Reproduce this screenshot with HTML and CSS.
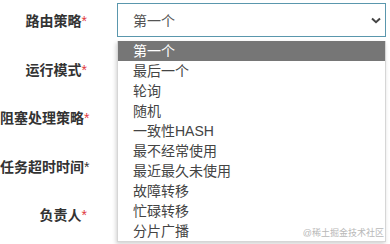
FILE: index.html
```html
<!DOCTYPE html>
<html lang="zh-CN">
<head>
  <meta charset="UTF-8">
  <meta name="viewport" content="width=device-width, initial-scale=1.0">
  <title>任务配置</title>
  <link rel="stylesheet" href="styles.css">
</head>
<body>

  <!-- Job form -->
  <div class="form">
    <div class="row">
      <label class="label"><span>路由策略<span class="req">*</span></span></label>
      <div class="select">
        <span>第一个</span>
        <svg class="chevron" width="10" height="7" viewBox="0 0 10 7"><path d="M1 1.5 L5 5.2 L9 1.5" fill="none" stroke="#444" stroke-width="2"/></svg>
      </div>
    </div>
    <div class="row">
      <label class="label"><span>运行模式<span class="req">*</span></span></label>
    </div>
    <div class="row">
      <label class="label"><span>阻塞处理策略<span class="req">*</span></span></label>
    </div>
    <div class="row">
      <label class="label"><span>任务超时时间<span class="req dark">*</span></span></label>
    </div>
    <div class="row">
      <label class="label"><span>负责人<span class="req">*</span></span></label>
    </div>
  </div>

  <!-- Open option list -->
  <ul class="dropdown">
    <li class="active">第一个</li>
    <li>最后一个</li>
    <li>轮询</li>
    <li>随机</li>
    <li>一致性HASH</li>
    <li>最不经常使用</li>
    <li>最近最久未使用</li>
    <li>故障转移</li>
    <li>忙碌转移</li>
    <li>分片广播</li>
  </ul>

  <div class="mark">@稀土掘金技术社区</div>
</body>
</html>
```

FILE: styles.css
```css
body { margin: 0; font-family: "Liberation Sans", "Noto Sans CJK SC", sans-serif; background: #fff; overflow: hidden; }
.form { padding-top: 3px; }
.row { display: flex; align-items: center; height: 34px; margin-bottom: 14.5px; }
.label { flex: 0 0 87px; display: flex; justify-content: flex-end; white-space: nowrap; font-size: 14px; font-weight: bold; color: #333; margin-right: 30px; }
.req { color: #e0383e; font-weight: normal; }
.req.dark { color: #333; }
.select { flex: 0 0 269px; box-sizing: border-box; height: 34px; border: 1px solid #5a97ad; display: flex; align-items: center; justify-content: space-between; padding: 0 4px 0 15px; font-size: 14px; color: #555; }
.dropdown { position: absolute; left: 117px; top: 41px; width: 269px; box-sizing: border-box; margin: 0; padding: 0; list-style: none; background: #fff; border: 1px solid #d6d6d6; border-top: none; box-shadow: -1px 2px 4px rgba(0,0,0,0.18); font-size: 14px; color: #444; }
.dropdown li { height: 20px; line-height: 20px; padding-left: 15px; }
.dropdown li.active { background: #767676; color: #fff; }
.mark { position: absolute; right: 6px; top: 226px; font-size: 9px; color: #b8b8b8; }
```
